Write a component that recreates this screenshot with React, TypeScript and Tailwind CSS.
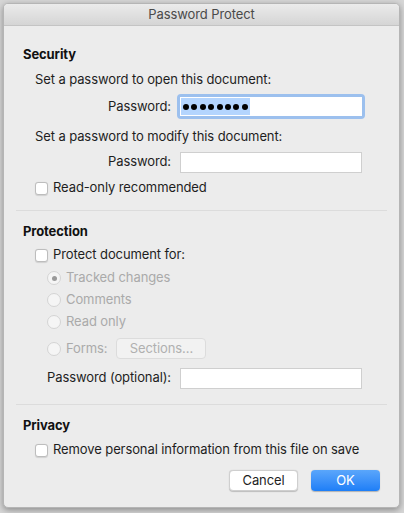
import React from "react";

const font = { fontFamily: "Inter, 'Liberation Sans', sans-serif" };

function Checkbox({ label, disabled }: { label: string; disabled?: boolean }) {
  return (
    <div className="flex items-center h-[16px] pl-[31px]">
      <span className="w-[13px] h-[13px] rounded-[3px] bg-white border border-[#bdbdbd] shadow-[0_0.5px_1px_rgba(0,0,0,0.12)]" />
      <span className={`ml-[5px] ${disabled ? "text-[#aaaaaa]" : "text-[#1e1e1e]"}`}>{label}</span>
    </div>
  );
}

function Radio({ label, checked }: { label: string; checked?: boolean }) {
  return (
    <div className="flex items-center h-[16px] pl-[43px]">
      <span className="w-[14px] h-[14px] rounded-full bg-[#f5f5f5] border border-[#d4d4d4] flex items-center justify-center">
        {checked && <span className="w-[5px] h-[5px] rounded-full bg-[#9a9a9a]" />}
      </span>
      <span className="ml-[5px] text-[#aaaaaa]">{label}</span>
    </div>
  );
}

function Heading({ children }: { children: React.ReactNode }) {
  return <div className="h-[16px] flex items-center pl-[19px] font-bold text-[#111]">{children}</div>;
}

export default function App() {
  const dots = [0, 1, 2, 3, 4, 5, 6, 7];
  return (
    <div className="w-[404px] h-[513px] bg-[#d6d6d6] pt-[3px] px-[3px] text-[13px] tracking-[-0.1px]" style={font}>
      <div className="w-[397px] h-[505px] rounded-[5px] bg-[#ececec] border border-[#b5b5b5] shadow-[0_2px_6px_rgba(0,0,0,0.35)] overflow-hidden flex flex-col">
        {/* title bar */}
        <div className="h-[22px] shrink-0 flex items-center justify-center bg-gradient-to-b from-[#ebebeb] to-[#d5d5d5] border-b border-[#c4c4c4] text-[#4a4a4a]">
          Password Protect
        </div>

        <div className="flex flex-col">
          {/* Security */}
          <div className="mt-[21px]"><Heading>Security</Heading></div>
          <div className="mt-[9px] h-[16px] flex items-center pl-[31px] text-[#1e1e1e]">Set a password to open this document:</div>
          <div className="mt-[6px] h-[25px] flex items-center">
            <span className="w-[167px] text-right text-[#1e1e1e]">Password:</span>
            <div className="ml-[6px] w-[188px] h-[25px] rounded-[4px] bg-[#9cc0ee] p-[3px]">
              <div className="w-full h-full bg-white flex items-center pl-[1px]">
                <span className="bg-[#b4d5fe] h-[17px] flex items-center gap-[2.4px] px-[2px]">
                  {dots.map((d) => (
                    <span key={d} className="w-[6px] h-[6px] rounded-full bg-black" />
                  ))}
                </span>
              </div>
            </div>
          </div>
          <div className="mt-[10px] h-[16px] flex items-center pl-[31px] text-[#1e1e1e]">Set a password to modify this document:</div>
          <div className="mt-[6px] h-[22px] flex items-center">
            <span className="w-[167px] text-right text-[#1e1e1e]">Password:</span>
            <div className="ml-[9px] w-[182px] h-[21px] bg-white border border-[#cfcfcf]" />
          </div>
          <div className="mt-[7px]"><Checkbox label="Read-only recommended" /></div>

          <div className="mt-[14px] mx-[12px] h-px bg-[#dcdcdc]" />

          {/* Protection */}
          <div className="mt-[13px]"><Heading>Protection</Heading></div>
          <div className="mt-[7px]"><Checkbox label="Protect document for:" /></div>
          <div className="mt-[7px]"><Radio label="Tracked changes" checked /></div>
          <div className="mt-[6px]"><Radio label="Comments" /></div>
          <div className="mt-[6px]"><Radio label="Read only" /></div>
          <div className="mt-[8px] h-[21px] flex items-center pl-[43px]">
            <span className="w-[14px] h-[14px] rounded-full bg-[#f5f5f5] border border-[#d4d4d4]" />
            <span className="ml-[5px] text-[#aaaaaa]">Forms:</span>
            <span className="ml-[9px] w-[90px] h-[21px] rounded-[4px] bg-[#f2f2f2] border border-[#dcdcdc] flex items-center justify-center text-[#b0b0b0]">Sections...</span>
          </div>
          <div className="mt-[8px] h-[22px] flex items-center">
            <span className="pl-[43px] w-[176px] text-[#1e1e1e]">Password (optional):</span>
            <div className="w-[182px] h-[21px] bg-white border border-[#cfcfcf]" />
          </div>

          <div className="mt-[15px] mx-[12px] h-px bg-[#dcdcdc]" />

          {/* Privacy */}
          <div className="mt-[13px]"><Heading>Privacy</Heading></div>
          <div className="mt-[8px]"><Checkbox label="Remove personal information from this file on save" /></div>

          <div className="mt-[12px] h-[22px] flex justify-end gap-[13px] pr-[19px]">
            <button className="w-[69px] h-[21px] rounded-[4px] bg-white border border-[#cfcfcf] shadow-[0_0.5px_1px_rgba(0,0,0,0.2)] text-[#1e1e1e]">Cancel</button>
            <button className="w-[69px] h-[21px] rounded-[4px] bg-gradient-to-b from-[#5aa6fb] to-[#1c7ef7] text-white shadow-[0_0.5px_1px_rgba(0,0,0,0.25)]">OK</button>
          </div>
        </div>
      </div>
    </div>
  );
}
